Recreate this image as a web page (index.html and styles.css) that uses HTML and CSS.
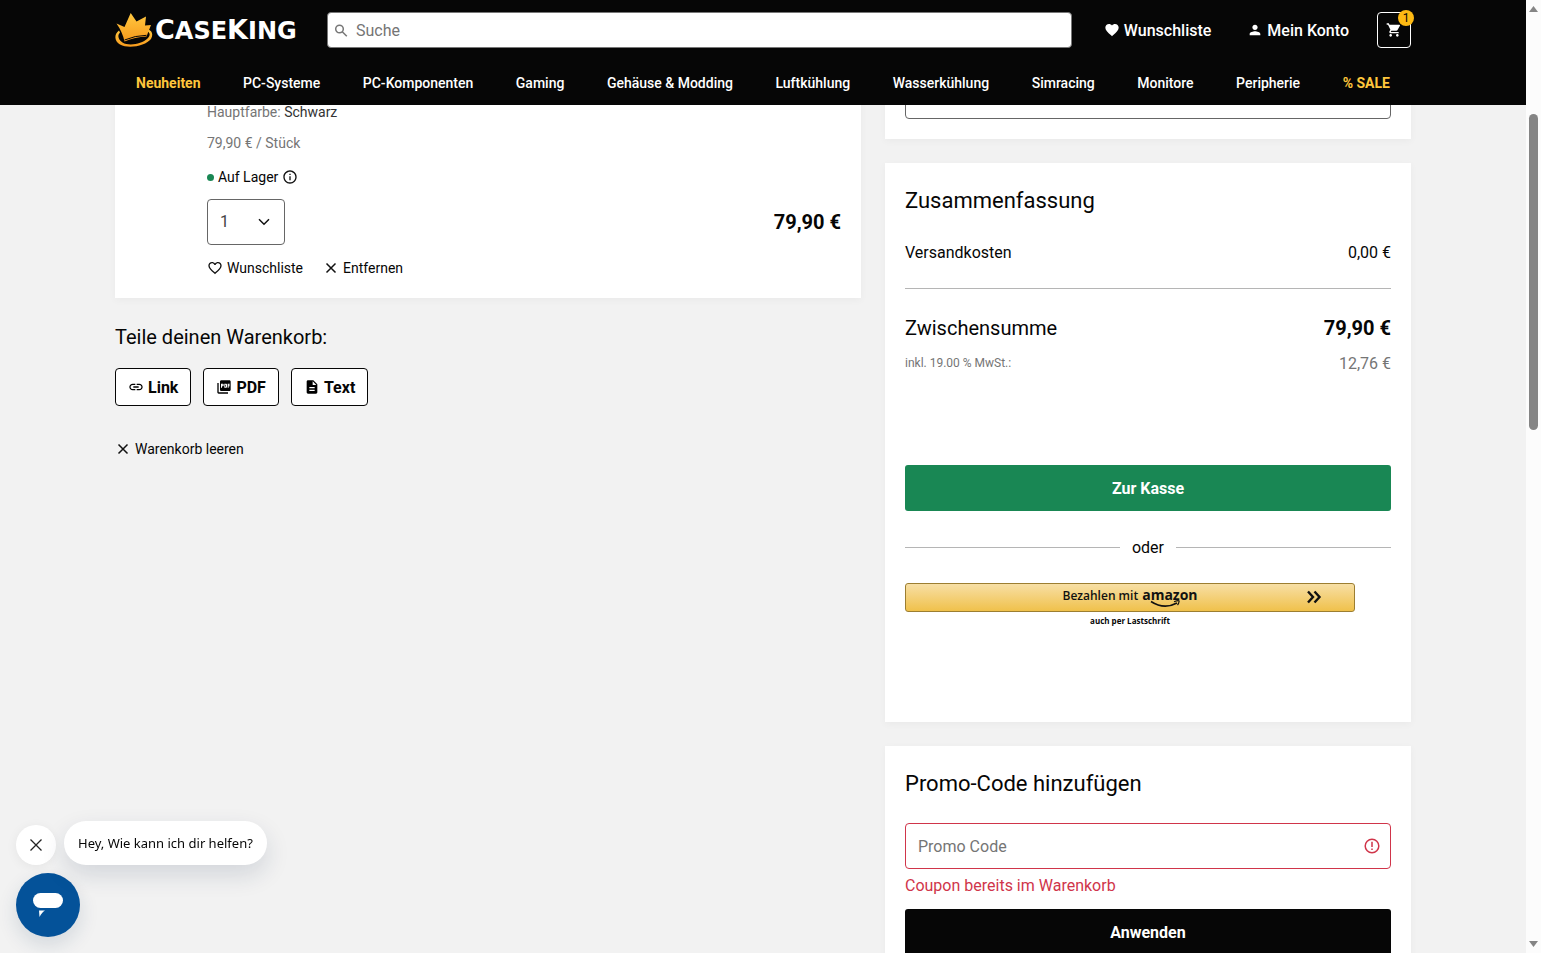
FILE: index.html
```html
<!DOCTYPE html>
<html lang="de">
<head>
  <meta charset="UTF-8" />
  <meta name="viewport" content="width=device-width, initial-scale=1.0"/>
  <title>Warenkorb | Caseking</title>
  <link rel="stylesheet" href="styles.css">
</head>
<body>

  <div class="page">

    <!-- Header -->
    <header class="header">
      <div class="container">
        <div class="header-top">
          <a href="#" class="logo">
            <svg width="38" height="36" viewBox="0 0 38 36">
              <defs>
                <linearGradient id="gold" x1="0" y1="0" x2="0" y2="1">
                  <stop offset="0" stop-color="#ffc840"/>
                  <stop offset="1" stop-color="#f79a1c"/>
                </linearGradient>
              </defs>
              <path fill="url(#gold)" d="M1.500 11.500L9.500 15L15.700 1L21.500 9.500L31 4.500L30 13.500L36 13L31.500 24.500Q20 25 9.500 29.500Q7.500 20 1.500 11.500Z"/>
              <path fill="url(#gold)" d="M4 18.500C-1 22-1 29 5 32.500C14 37.500 31 33.500 36 27C38.500 22.500 37 19 33.500 17.500L33 19.500C35.500 21.500 35 24 32.500 26.500C27 32 14 34.500 7.500 30.500C3 27.500 2.200 23.500 5 20.500Z"/>
              <path fill="none" stroke="#060606" d="M9.500 28Q20 23.500 31.500 23.300"/>
            </svg>
            <span class="logo-text"><b>C</b>ASE<b>K</b>ING</span>
          </a>

          <form class="search">
            <svg width="14" height="14" viewBox="0 0 14 14" fill="none" stroke="#777" stroke-width="1.500">
              <circle cx="5.500" cy="6" r="3.800"/>
              <path d="M8.300 8.800L12.800 13.300"/>
            </svg>
            <input type="text" placeholder="Suche" aria-label="Suche">
          </form>

          <div class="account">
            <a href="#">
              <svg width="16" height="16" viewBox="0 0 24 24" fill="#fff"><path d="M12 21.350l-1.450-1.320C5.400 15.360 2 12.280 2 8.500 2 5.420 4.420 3 7.500 3c1.740 0 3.410.81 4.500 2.090C13.090 3.810 14.760 3 16.500 3 19.580 3 22 5.420 22 8.500c0 3.780-3.400 6.860-8.550 11.540L12 21.350z"/></svg>
              Wunschliste
            </a>
            <a href="#">
              <svg width="16" height="16" viewBox="0 0 24 24" fill="#fff"><path d="M12 12c2.210 0 4-1.790 4-4s-1.790-4-4-4-4 1.790-4 4 1.790 4 4 4zm0 2c-2.670 0-8 1.340-8 4v2h16v-2c0-2.660-5.330-4-8-4z"/></svg>
              Mein Konto
            </a>
            <a href="#" class="cart" aria-label="Warenkorb">
              <svg width="16" height="16" viewBox="0 0 24 24" fill="#fff"><path d="M7 18c-1.100 0-1.990.9-1.990 2S5.900 22 7 22s2-.9 2-2-.9-2-2-2zM1 2v2h2l3.600 7.590-1.350 2.450c-.16.280-.25.610-.25.960 0 1.100.9 2 2 2h12v-2H7.420c-.14 0-.25-.11-.25-.25l.03-.12.900-1.630h7.450c.75 0 1.410-.41 1.750-1.030l3.580-6.490c.08-.14.12-.31.12-.48 0-.55-.45-1-1-1H5.210l-.94-2H1zm16 16c-1.100 0-1.990.9-1.990 2s.89 2 1.990 2 2-.9 2-2-.9-2-2-2z"/></svg>
              <span class="badge">1</span>
            </a>
          </div>
        </div>

        <nav class="nav">
          <a href="#" class="highlight">Neuheiten</a>
          <a href="#">PC-Systeme</a>
          <a href="#">PC-Komponenten</a>
          <a href="#">Gaming</a>
          <a href="#">Gehäuse &amp; Modding</a>
          <a href="#">Luftkühlung</a>
          <a href="#">Wasserkühlung</a>
          <a href="#">Simracing</a>
          <a href="#">Monitore</a>
          <a href="#">Peripherie</a>
          <a href="#" class="highlight">% SALE</a>
        </nav>
      </div>
    </header>

    <!-- Cart -->
    <main class="container cart-layout">
      <section class="cart-items">
        <article class="card item">
          <div class="item-body">
            <p class="muted">Hauptfarbe: <span class="value">Schwarz</span></p>
            <p class="muted unit-price">79,90 € / Stück</p>
            <p class="stock">
              <span class="dot"></span>
              Auf Lager
              <svg width="16" height="16" viewBox="0 0 24 24" fill="#111"><path d="M11 7h2v2h-2zm0 4h2v6h-2zm1-9C6.480 2 2 6.480 2 12s4.480 10 10 10 10-4.480 10-10S17.520 2 12 2zm0 18c-4.410 0-8-3.590-8-8s3.590-8 8-8 8 3.590 8 8-3.590 8-8 8z"/></svg>
            </p>
            <div class="item-row">
              <div class="select-wrap">
                <select aria-label="Menge">
                  <option>1</option>
                </select>
                <svg width="12" height="8" viewBox="0 0 12 8" fill="none" stroke="#111" stroke-width="1.500"><path d="M1 1.200L6 6.200L11 1.200"/></svg>
              </div>
              <strong class="price">79,90 €</strong>
            </div>
            <div class="item-actions">
              <a href="#" class="text-link">
                <svg width="16" height="16" viewBox="0 0 24 24" fill="#111"><path d="M16.500 3c-1.740 0-3.410.81-4.500 2.090C10.910 3.810 9.240 3 7.500 3 4.420 3 2 5.420 2 8.500c0 3.780 3.400 6.860 8.550 11.540L12 21.350l1.450-1.320C18.600 15.360 22 12.280 22 8.500 22 5.420 19.580 3 16.500 3zm-4.400 15.550l-.1.100-.1-.1C7.140 14.240 4 11.390 4 8.500 4 6.500 5.500 5 7.500 5c1.540 0 3.040.99 3.570 2.360h1.870C13.460 5.990 14.960 5 16.500 5c2 0 3.500 1.500 3.500 3.500 0 2.890-3.140 5.740-7.900 10.050z"/></svg>
                Wunschliste
              </a>
              <a href="#" class="text-link">
                <svg width="16" height="16" viewBox="0 0 16 16" stroke="#111" stroke-width="1.500"><path d="M3.500 3.500L12.500 12.500M12.500 3.500L3.500 12.500"/></svg>
                Entfernen
              </a>
            </div>
          </div>
        </article>

        <h3 class="share-title">Teile deinen Warenkorb:</h3>
        <div class="share-buttons">
          <button type="button">
            <svg width="16" height="16" viewBox="0 0 24 24" fill="#000"><path d="M3.900 12c0-1.710 1.390-3.100 3.100-3.100h4V7H7c-2.760 0-5 2.240-5 5s2.240 5 5 5h4v-1.900H7c-1.710 0-3.100-1.390-3.100-3.100zM8 13h8v-2H8v2zm9-6h-4v1.900h4c1.710 0 3.100 1.390 3.100 3.100s-1.390 3.100-3.100 3.100h-4V17h4c2.760 0 5-2.240 5-5s-2.240-5-5-5z"/></svg>
            Link
          </button>
          <button type="button">
            <svg width="16" height="16" viewBox="0 0 24 24" fill="#000"><path d="M20 2H8c-1.100 0-2 .9-2 2v12c0 1.100.9 2 2 2h12c1.100 0 2-.9 2-2V4c0-1.100-.9-2-2-2zm-8.500 7.500c0 .83-.67 1.500-1.500 1.500H9v2H7.500V7H10c.83 0 1.500.67 1.500 1.500v1zm5 2c0 .83-.67 1.500-1.500 1.500h-2.500V7H15c.83 0 1.500.67 1.500 1.500v3zm4-3H19v1h1.500V11H19v2h-1.500V7h3v1.500zM9 9.500h1v-1H9v1zM4 6H2v14c0 1.100.9 2 2 2h14v-2H4V6zm10 5.500h1v-3h-1v3z"/></svg>
            PDF
          </button>
          <button type="button">
            <svg width="16" height="16" viewBox="0 0 24 24" fill="#000"><path d="M14 2H6c-1.100 0-1.990.9-1.990 2L4 20c0 1.100.89 2 1.990 2H18c1.100 0 2-.9 2-2V8l-6-6zm2 16H8v-2h8v2zm0-4H8v-2h8v2zm-3-5V3.500L18.500 9H13z"/></svg>
            Text
          </button>
        </div>

        <a href="#" class="text-link clear-cart">
          <svg width="16" height="16" viewBox="0 0 16 16" stroke="#111" stroke-width="1.500"><path d="M3.500 3.500L12.500 12.500M12.500 3.500L3.500 12.500"/></svg>
          Warenkorb leeren
        </a>
      </section>

      <aside class="sidebar">
        <div class="card delivery">
          <input type="text" class="field" aria-label="Lieferung">
        </div>

        <div class="card summary">
          <h2>Zusammenfassung</h2>
          <div class="row"><span>Versandkosten</span><span>0,00 €</span></div>
          <hr>
          <div class="row total"><span>Zwischensumme</span><strong>79,90 €</strong></div>
          <div class="row tax"><small>inkl. 19.00 % MwSt.:</small><span>12,76 €</span></div>
          <button type="button" class="btn btn-checkout">Zur Kasse</button>
          <div class="divider">oder</div>
          <div class="amazon">
            <button type="button" class="amazon-btn">
              <span>Bezahlen mit</span>
              <span class="amazon-logo">
                amazon
                <svg width="32" height="8" viewBox="0 0 32 8" fill="none" stroke="#111"><path stroke-width="1.600" d="M1 1.500Q14 10 27 3"/><path stroke-width="1.200" d="M24 1.700Q30-.3 29 1.700Q28.800 3.500 27.500 5"/></svg>
              </span>
              <svg class="chevrons" width="16" height="14" viewBox="0 0 16 14" fill="none" stroke="#111" stroke-width="2.400"><path d="M2 1.500L7 7L2 12.500M8.500 1.500L13.500 7L8.500 12.500"/></svg>
            </button>
            <p>auch per Lastschrift</p>
          </div>
        </div>

        <form class="card promo">
          <h2>Promo-Code hinzufügen</h2>
          <div class="promo-field">
            <input type="text" class="field invalid" placeholder="Promo Code" aria-label="Promo Code">
            <svg width="16" height="16" viewBox="0 0 16 16" fill="none" stroke="#d0354a" stroke-width="1.500"><circle cx="8" cy="8" r="6.800"/><path d="M8 3.800V9M8 10.500V12"/></svg>
          </div>
          <p class="error">Coupon bereits im Warenkorb</p>
          <button type="button" class="btn btn-apply">Anwenden</button>
        </form>
      </aside>
    </main>
  </div>

  <!-- Scrollbar -->
  <div class="scrollbar">
    <svg width="9" height="6" viewBox="0 0 9 6" fill="#858585"><path d="M4.500 0L9 6H0Z"/></svg>
    <div class="track"><div class="thumb"></div></div>
    <svg width="9" height="6" viewBox="0 0 9 6" fill="#858585"><path d="M4.500 6L9 0H0Z"/></svg>
  </div>

  <!-- Chat -->
  <div class="chat">
    <div class="chat-message">
      <button type="button" class="chat-close" aria-label="Schließen">
        <svg width="14" height="14" viewBox="0 0 14 14" stroke="#222" stroke-width="1.300"><path d="M1.500 1.500L12.500 12.500M12.500 1.500L1.500 12.500"/></svg>
      </button>
      <p class="chat-bubble">Hey, Wie kann ich dir helfen?</p>
    </div>
    <button type="button" class="chat-launcher" aria-label="Chat">
      <svg width="30" height="24" viewBox="0 0 30 24" fill="#fff"><rect width="30" height="15" rx="7.500"/><path d="M6 17.500H12Q9 19 6.500 24Z"/></svg>
    </button>
  </div>

</body>
</html>
```
FILE: styles.css
```css
* {
  margin: 0;
  padding: 0;
  box-sizing: border-box;
}

body {
  display: flex;
  height: 100vh;
  overflow: hidden;
  background-color: #f2f2f2;
  color: #060606;
  font-family: Roboto, sans-serif;
  font-size: 16px;
  line-height: 25px;
}

a {
  color: inherit;
  text-decoration: none;
}

svg {
  flex-shrink: 0;
}

button,
input,
select {
  font: inherit;
  color: inherit;
}

button {
  cursor: pointer;
}

.page {
  flex: 1;
  min-width: 0;
  overflow: hidden;
}

.container {
  max-width: 1296px;
  margin: 0 auto;
}

/* Header */
.header {
  position: relative;
  z-index: 10;
  padding: 12px 0;
  background-color: #060606;
  color: #fff;
}

.header-top {
  display: flex;
  align-items: center;
  gap: 24px;
  height: 36px;
}

.logo {
  display: flex;
  align-items: center;
  gap: 2px;
  width: 188px;
}

.logo-text {
  font-family: "DejaVu Sans", sans-serif;
  font-size: 24px;
  font-weight: bold;
}

.logo-text b {
  font-size: 27px;
}

.search {
  display: flex;
  flex: 1;
  align-items: center;
  gap: 8px;
  height: 36px;
  padding: 0 6px;
  border: 1px solid #777;
  border-radius: 4px;
  background-color: #fff;
}

.search input {
  flex: 1;
  border: none;
  outline: none;
  background: none;
}

::placeholder {
  color: #757575;
  opacity: 1;
}

.account {
  display: flex;
  align-items: center;
  gap: 28px;
  padding-left: 8px;
  font-weight: 500;
}

.account a {
  display: flex;
  align-items: center;
  gap: 4px;
}

.account a + a {
  margin-left: 8px;
}

.account .cart {
  position: relative;
  justify-content: center;
  width: 34px;
  height: 36px;
  margin-left: 0;
  border: 1px solid #fff;
  border-radius: 4px;
}

.badge {
  position: absolute;
  top: -3px;
  right: -4px;
  width: 16px;
  height: 16px;
  border-radius: 50%;
  background-color: #fdb913;
  color: #060606;
  font-size: 12px;
  font-weight: 400;
  line-height: 16px;
  text-align: center;
}

.nav {
  display: flex;
  justify-content: space-between;
  margin-top: 25px;
  padding: 0 21px;
  font-size: 14px;
  font-weight: 500;
  line-height: 20px;
}

.nav .highlight {
  color: #ffc63c;
  font-weight: 700;
}

/* Cart layout, scrolled below the header */
.cart-layout {
  display: grid;
  grid-template-columns: 746fr 526fr;
  align-items: start;
  gap: 24px;
  margin-top: -80px;
}

.card {
  padding: 20px;
  background-color: #fff;
  box-shadow: 0 2px 8px rgba(0, 0, 0, 0.04);
}

/* Cart item */
.item {
  padding: 77px 20px 20px 92px;
  font-size: 14px;
  line-height: 20px;
}

.muted {
  color: #757575;
}

.muted .value {
  color: #333;
}

.unit-price {
  margin-top: 11px;
}

.stock {
  display: flex;
  align-items: center;
  gap: 4px;
  margin: 14px 0 12px;
}

.dot {
  width: 7px;
  height: 7px;
  border-radius: 50%;
  background-color: #198754;
}

.item-row {
  display: flex;
  align-items: center;
  justify-content: space-between;
}

.select-wrap {
  position: relative;
  width: 78px;
}

.select-wrap select {
  width: 100%;
  height: 46px;
  padding: 0 12px;
  border: 1px solid #666;
  border-radius: 4px;
  background-color: #fff;
  color: #444;
  font-size: 16px;
  appearance: none;
}

.select-wrap svg {
  position: absolute;
  top: 19px;
  right: 15px;
  pointer-events: none;
}

.price {
  font-size: 20px;
}

.item-actions {
  display: flex;
  gap: 20px;
  margin-top: 13px;
}

.text-link {
  display: flex;
  align-items: center;
  gap: 4px;
  font-size: 14px;
  line-height: 20px;
}

/* Share */
.share-title {
  margin: 24px 0 16px;
  font-size: 20px;
  font-weight: 400;
  line-height: 30px;
}

.share-buttons {
  display: flex;
  gap: 12px;
}

.share-buttons button {
  display: flex;
  align-items: center;
  gap: 4px;
  height: 38px;
  padding: 0 12px;
  border: 1px solid #060606;
  border-radius: 4px;
  background-color: #fff;
  font-weight: 700;
}

.clear-cart {
  margin-top: 33px;
}

/* Sidebar */
.sidebar {
  display: flex;
  flex-direction: column;
  gap: 24px;
}

.delivery {
  padding-top: 48px;
}

.field {
  display: block;
  width: 100%;
  height: 46px;
  padding: 0 12px;
  border: 1px solid #666;
  border-radius: 4px;
  background-color: #fff;
}

.card h2 {
  margin-bottom: 22px;
  font-size: 22px;
  font-weight: 400;
  line-height: 35px;
}

.row {
  display: flex;
  align-items: center;
  justify-content: space-between;
}

.summary {
  padding-bottom: 95px;
}

.summary hr {
  margin: 23px 0 24px;
  border: none;
  border-top: 1px solid #b5b5b5;
}

.total {
  font-size: 20px;
  line-height: 30px;
}

.tax {
  margin-top: 8px;
  color: #757575;
}

.tax small {
  font-size: 12px;
}

.btn {
  display: block;
  width: 100%;
  height: 46px;
  border: none;
  border-radius: 3px;
  color: #fff;
  font-weight: 700;
}

.btn-checkout {
  margin-top: 89px;
  background-color: #198754;
}

.divider {
  display: flex;
  align-items: center;
  gap: 12px;
  margin: 24px 0 23px;
}

.divider::before,
.divider::after {
  content: "";
  flex: 1;
  border-top: 1px solid #b5b5b5;
}

/* Amazon Pay */
.amazon {
  max-width: 450px;
  font-family: "Open Sans", sans-serif;
  text-align: center;
}

.amazon-btn {
  position: relative;
  display: flex;
  justify-content: center;
  gap: 4px;
  width: 100%;
  height: 29px;
  border: 1px solid #9c7e31;
  border-radius: 3px;
  background: linear-gradient(#f7dfa5, #f0c14b);
  color: #111;
  font-size: 12px;
  font-weight: 600;
  line-height: 24px;
}

.amazon-logo {
  position: relative;
  font-size: 14px;
  font-weight: 700;
  line-height: 22px;
}

.amazon-logo svg {
  position: absolute;
  top: 16px;
  left: 8px;
}

.amazon-btn .chevrons {
  position: absolute;
  top: 6px;
  right: 32px;
}

.amazon p {
  margin-top: 3px;
  font-size: 8px;
  font-weight: 700;
  line-height: 12px;
}

/* Promo code */
.promo-field {
  position: relative;
}

.field.invalid {
  border-color: #d0354a;
}

.promo-field svg {
  position: absolute;
  top: 15px;
  right: 11px;
}

.error {
  margin: 4px 0 11px;
  color: #d0354a;
}

.btn-apply {
  background-color: #060606;
}

/* Scrollbar */
.scrollbar {
  display: flex;
  flex-direction: column;
  align-items: center;
  width: 15px;
  padding: 6px 0;
  background-color: #fcfcfc;
}

.track {
  display: flex;
  flex: 1;
  flex-direction: column;
}

.track::before {
  content: "";
  height: 11%;
}

.thumb {
  width: 9px;
  height: 34%;
  border-radius: 5px;
  background-color: #858585;
}

/* Chat */
.chat {
  position: fixed;
  bottom: 16px;
  left: 16px;
  z-index: 20;
}

.chat-message {
  display: flex;
  align-items: flex-end;
  gap: 8px;
  margin-bottom: 8px;
}

.chat-close,
.chat-launcher {
  display: flex;
  align-items: center;
  justify-content: center;
  border: none;
  border-radius: 50%;
}

.chat-close {
  width: 40px;
  height: 40px;
  background-color: #fff;
  box-shadow: 0 2px 12px rgba(0, 0, 0, 0.06);
}

.chat-bubble {
  padding: 10px 14px;
  border-radius: 22px;
  background-color: #fff;
  box-shadow: 0 10px 24px rgba(20, 40, 80, 0.14);
  font-family: "Noto Sans", sans-serif;
  font-size: 13px;
  line-height: 24px;
}

.chat-launcher {
  width: 64px;
  height: 64px;
  background-color: #045299;
  box-shadow: 0 8px 20px rgba(20, 60, 90, 0.14);
}
```
